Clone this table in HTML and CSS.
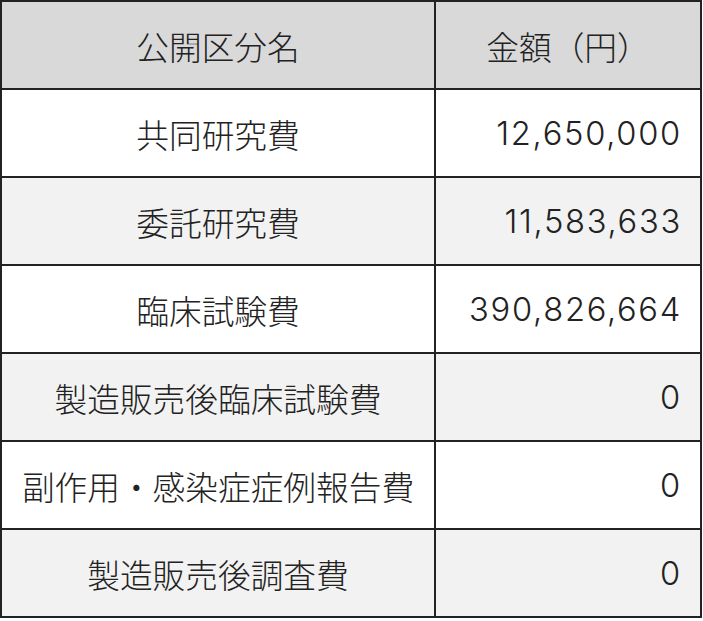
FILE: index.html
```html
<!DOCTYPE html>
<html lang="ja">
<head>
<meta charset="utf-8">
<link rel="stylesheet" href="styles.css">
</head>
<body>
<table class="cost-table">
  <thead>
    <tr><th class="name">公開区分名</th><th class="amount-h">金額（円）</th></tr>
  </thead>
  <tbody>
    <tr><td class="name">共同研究費</td><td class="amount">12,650,000</td></tr>
    <tr class="alt"><td class="name">委託研究費</td><td class="amount">11,583,633</td></tr>
    <tr><td class="name">臨床試験費</td><td class="amount">390,826,664</td></tr>
    <tr class="alt"><td class="name">製造販売後臨床試験費</td><td class="amount">0</td></tr>
    <tr><td class="name">副作用・感染症症例報告費</td><td class="amount">0</td></tr>
    <tr class="alt"><td class="name">製造販売後調査費</td><td class="amount">0</td></tr>
  </tbody>
</table>
</body>
</html>
```
FILE: styles.css
```css
html, body {
  margin: 0;
  padding: 0;
  background: #ffffff;
}
.cost-table {
  border-collapse: collapse;
  width: 702px;
  font-family: "Noto Sans CJK JP", "Noto Sans", sans-serif;
  font-size: 32.7px;
  font-weight: 300;
  color: #222222;
}
.cost-table th,
.cost-table td {
  border: 2px solid #222222;
  height: 86px;
  padding: 0;
  font-weight: 300;
  vertical-align: middle;
}
.cost-table thead th {
  background: #d9d9d9;
}
.cost-table .name {
  width: 432px;
  text-align: center;
}
.cost-table .amount-h {
  text-align: center;
}
.cost-table .amount {
  text-align: right;
  padding-right: 18px;
  font-family: Inter, "Noto Sans CJK JP", sans-serif;
  font-weight: 300;
  letter-spacing: 1.7px;
}
.cost-table tr.alt td {
  background: #f2f2f2;
}
```
